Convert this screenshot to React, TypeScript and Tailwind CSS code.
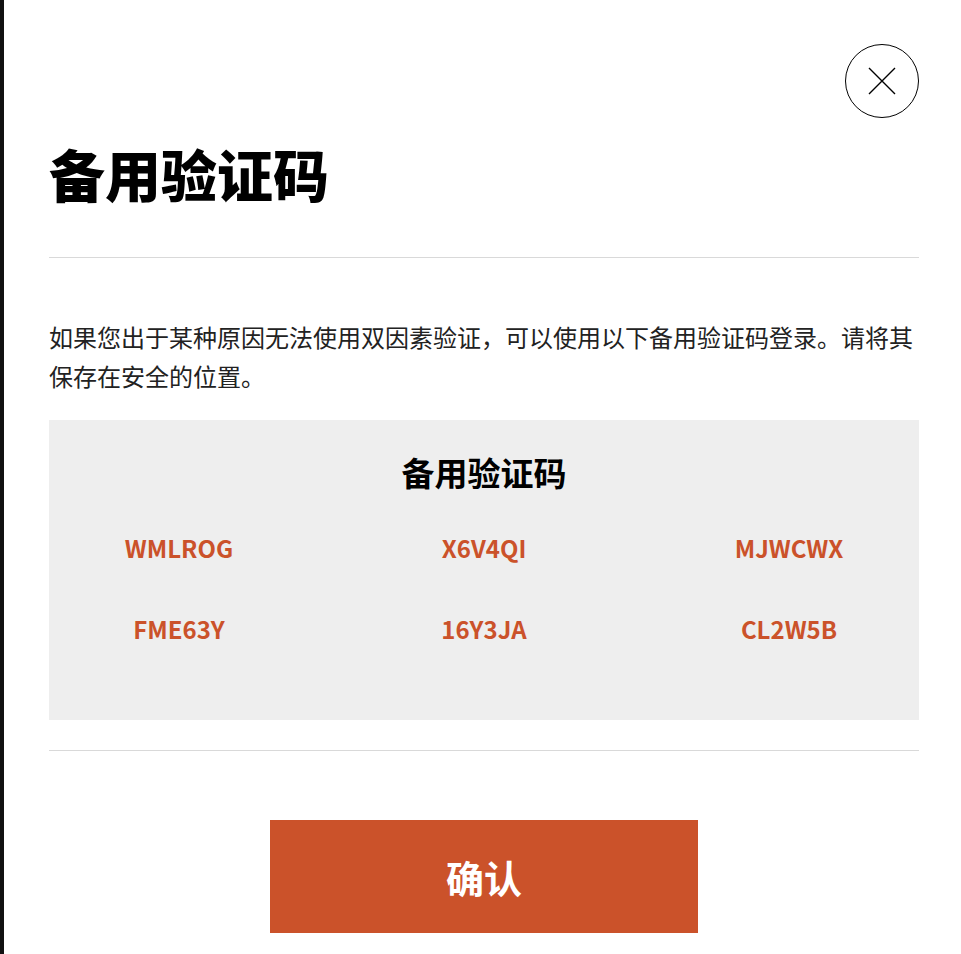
const codes = ['WMLROG', 'X6V4QI', 'MJWCWX', 'FME63Y', '16Y3JA', 'CL2W5B'];

export default function App() {
  return (
    <div
      className="flex min-h-[954px] w-[961px] bg-white"
      style={{ fontFamily: '"Noto Sans CJK SC", "Noto Sans", sans-serif' }}
    >
      {/* dark edge of the page behind the dialog */}
      <div className="w-[4px] shrink-0 bg-[#111]" />

      <div className="flex w-[870px] flex-col pl-[45px] box-content">
        {/* close */}
        <div className="flex justify-end pt-[44px]">
          <button className="flex h-[74px] w-[74px] items-center justify-center rounded-full border border-black">
            <svg width="28" height="28" viewBox="0 0 28 28" fill="none">
              <path d="M1 1L27 27M27 1L1 27" stroke="#000" strokeWidth="1.4" />
            </svg>
          </button>
        </div>

        <h1 className="mt-[16px] text-[56px] font-black leading-[78px] text-black">备用验证码</h1>

        <div className="mt-[45px] h-px bg-[#d9d9d9]" />

        <p className="mt-[59px] text-[24px] leading-[39px] text-[#222]">
          如果您出于某种原因无法使用双因素验证，可以使用以下备用验证码登录。请将其保存在安全的位置。
        </p>

        <div className="mt-[25px] bg-[#eeeeee] pt-[29px] pb-[75px]">
          <h2 className="text-center text-[33px] font-bold leading-[46px] text-black">备用验证码</h2>
          <div className="mt-[37px] grid grid-cols-[260px_260px_260px] justify-center gap-x-[45px] gap-y-[49px]">
            {codes.map((c) => (
              <div key={c} className="text-center text-[24px] font-semibold leading-[32px] text-[#cb522a]">
                {c}
              </div>
            ))}
          </div>
        </div>

        <div className="mt-[30px] h-px bg-[#d9d9d9]" />

        <div className="mt-[69px] flex justify-center">
          <button className="h-[113px] w-[428px] bg-[#cb522a] text-[38px] font-bold text-white">确认</button>
        </div>
      </div>
    </div>
  );
}
